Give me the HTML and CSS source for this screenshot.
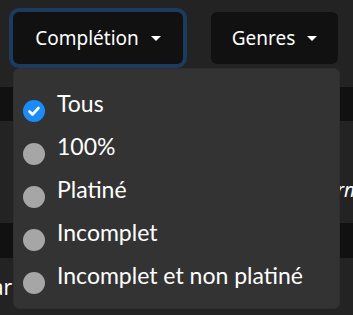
FILE: index.html
```html
<!DOCTYPE html>
<html lang="fr">
<head>
<meta charset="utf-8">
<link rel="stylesheet" href="styles.css">
</head>
<body>
<div class="page">
  <div class="toolbar">
    <div class="dd">
      <button class="btn focused">Complétion <span class="caret"></span></button>
      <div class="menu">
        <label class="item"><span class="radio checked"><svg viewBox="0 0 22 22" width="22" height="22"><path d="M6.5 11.5l3 3 6-6.5" fill="none" stroke="#fff" stroke-width="2.6" stroke-linecap="round" stroke-linejoin="round"/></svg></span><span class="txt">Tous</span></label>
        <label class="item"><span class="radio"></span><span class="txt">100%</span></label>
        <label class="item"><span class="radio"></span><span class="txt">Platiné</span></label>
        <label class="item"><span class="radio"></span><span class="txt">Incomplet</span></label>
        <label class="item"><span class="radio"></span><span class="txt">Incomplet et non platiné</span></label>
      </div>
    </div>
    <button class="btn">Genres <span class="caret"></span></button>
  </div>
  <div class="band"></div>
  <div class="row row-right"><span class="ghost">Modern</span></div>
  <div class="band band2"></div>
  <div class="row row-left"><span class="ghost2">Standar</span></div>
</div>
</body>
</html>
```

FILE: styles.css
```css
* { box-sizing: border-box; }
html, body { margin: 0; padding: 0; }
body {
  background: #232323;
  font-family: "Noto Sans", "Open Sans", sans-serif;
  color: #fff;
  width: 353px;
  height: 315px;
  overflow: hidden;
}
.page { display: flex; flex-direction: column; }
.toolbar {
  display: flex;
  gap: 28px;
  padding: 12px 0 0 13px;
  height: 87px;
}
.dd { position: relative; }
.btn {
  display: flex;
  align-items: center;
  justify-content: center;
  gap: 12px;
  height: 52px;
  background: #111;
  color: #fff;
  border: none;
  border-radius: 6px;
  font-family: inherit;
  font-size: 19px;
  padding: 0 22px;
}
.dd .btn { width: 170px; }
.btn:not(.focused) { width: 127px; }
.focused { box-shadow: 0 0 0 4px #1d3b5e; }
.caret {
  width: 0; height: 0;
  border-left: 5.5px solid transparent;
  border-right: 5.5px solid transparent;
  border-top: 5.5px solid #fff;
  margin-top: 1px;
}
.menu {
  position: absolute;
  left: 0;
  top: 56px;
  width: 327px;
  height: 241px;
  background: #333;
  border-radius: 6px;
  border: 1px solid #2e2e2e;
  padding: 17px 0 0 9px;
  display: flex;
  flex-direction: column;
  z-index: 5;
}
.item {
  display: flex;
  align-items: center;
  height: 43px;
  gap: 12px;
}
.radio {
  width: 22px; height: 22px;
  border-radius: 50%;
  background: #a6a6a6;
  flex: none;
  margin-top: 7px;
  display: flex;
}
.radio.checked { background: #1b8cf5; }
.txt {
  font-family: "Lato", "Noto Sans", sans-serif;
  font-size: 23px;
  line-height: 1;
  margin-top: -8px;
}
.band { height: 34px; background: #111; }
.row { height: 102px; display: flex; align-items: center; }
.band2 { height: 35px; }
.row-right { justify-content: flex-end; padding-top: 36px; }
.ghost { font-style: italic; font-size: 19px; margin-right: -2px; }
.row-left { height: 57px; }
.ghost2 { font-size: 21px; margin-left: -65px; }
```
